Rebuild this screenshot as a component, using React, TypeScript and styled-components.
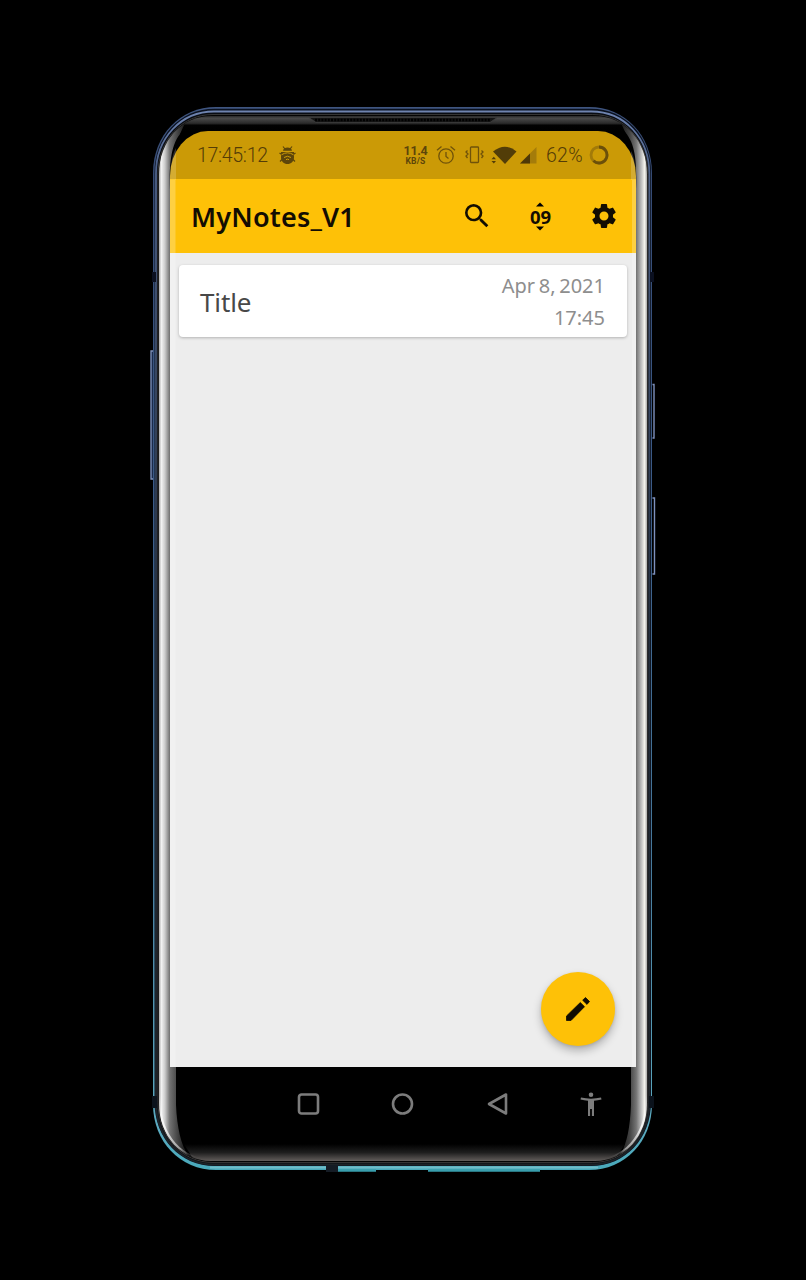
import React from "react";
import styled, { createGlobalStyle } from "styled-components";

const GlobalStyle = createGlobalStyle`
  * { box-sizing: border-box; }
  body { margin: 0; background: #000; font-family: "Noto Sans", "Open Sans", sans-serif; }
  button { font-family: inherit; }
`;

const Stage = styled.main`
  width: 806px;
  height: 1280px;
  background: #000;
  padding: 107px 0 0 150px;
  overflow: hidden;
`;

const Phone = styled.div`
  position: relative;
  width: 506px;
  height: 1066px;
  padding: 24px 20px 0;
`;

const FrameArt = styled.svg`
  position: absolute;
  inset: 0;
  pointer-events: none;
`;

const Screen = styled.section`
  position: relative;
  width: 466px;
  height: 1010px;
  display: flex;
  flex-direction: column;
`;

const StatusBar = styled.header`
  height: 48px;
  flex: none;
  display: flex;
  align-items: center;
  padding: 0 27px 0 27px;
  background: #cb9a06;
  color: #6b4f0a;
  border-radius: 38px 38px 0 0 / 45px 45px 0 0;
`;

const StatusText = styled.span<{ $width: number; $tracking?: number }>`
  width: ${(p) => p.$width}px;
  margin-top: 1px;
  font: 300 19.5px/24px Roboto, sans-serif;
  letter-spacing: ${(p) => p.$tracking ?? -0.3}px;
  white-space: nowrap;
  color: #543c06;
`;

const StatusIcon = styled.svg<{ $gap?: number }>`
  flex: none;
  display: block;
  margin-left: ${(p) => p.$gap ?? 0}px;
`;

const Speed = styled.div`
  margin-left: auto;
  width: 25px;
  text-align: center;
  font: 700 12.5px/12px Roboto, sans-serif;
  letter-spacing: -0.3px;
  color: #5d450a;
`;

const SpeedUnit = styled.small`
  display: block;
  font-size: 8.5px;
  line-height: 8px;
  letter-spacing: 0.2px;
`;

const AppBar = styled.div`
  height: 74px;
  flex: none;
  display: flex;
  align-items: center;
  padding: 0 17px 0 21px;
  background: #fec107;
  color: #130d02;
`;

const AppTitle = styled.h1`
  margin: 1px auto 0 0;
  font-size: 27px;
  line-height: 34px;
  font-weight: 600;
  letter-spacing: 0.2px;
`;

const Actions = styled.div`
  display: flex;
  gap: 34px;
`;

const ActionButton = styled.button`
  width: 30px;
  height: 32px;
  padding: 0;
  border: 0;
  background: none;
  color: inherit;
  display: flex;
  flex-direction: column;
  align-items: center;
  justify-content: center;
`;

const SearchGlyph = styled.svg`
  flex: none;
  margin-left: 2px;
`;

const SortDigits = styled.span`
  margin: 1px 0 1px 1px;
  font-size: 18.5px;
  line-height: 17px;
  font-weight: 700;
`;

const Content = styled.div`
  flex: 1;
  display: flex;
  flex-direction: column;
  justify-content: space-between;
  padding: 12px 9px 21px;
  background: #ededed;
`;

const NoteCard = styled.article`
  height: 72px;
  display: flex;
  align-items: center;
  justify-content: space-between;
  padding: 0 22px 0 21px;
  border-radius: 4px;
  background: #fff;
  box-shadow: 0 1px 3px rgba(0, 0, 0, 0.25);
`;

const NoteTitle = styled.h2`
  margin: 1px 0 0;
  font-size: 26px;
  line-height: 34px;
  font-weight: 400;
  letter-spacing: -0.1px;
  color: #484848;
`;

const NoteDate = styled.div`
  margin-top: 2px;
  text-align: right;
  font-size: 20px;
  line-height: 32px;
  font-weight: 400;
  letter-spacing: 0;
  word-spacing: -1.5px;
  color: #8e8e8e;
  white-space: nowrap;
`;

const Fab = styled.button`
  align-self: flex-end;
  width: 74px;
  height: 74px;
  margin-right: 12px;
  padding: 0;
  border: 0;
  border-radius: 50%;
  display: flex;
  align-items: center;
  justify-content: center;
  background: #fec107;
  box-shadow: 0 5px 9px rgba(0, 0, 0, 0.25), 0 1px 3px rgba(0, 0, 0, 0.1);
`;

const NavBar = styled.nav`
  height: 74px;
  flex: none;
  display: flex;
  align-items: center;
  justify-content: space-between;
  padding: 0 33px 0 126px;
`;

const NavIcon = styled.svg`
  display: block;
  width: 24px;
  height: 24px;
  overflow: visible;
`;

function shell(x: number, y: number, r: number, b: number, rx: number, ry: number) {
  const k = 0.43;
  return [
    `M${x + rx} ${y}H${r - rx}`,
    `C${r - rx * k} ${y} ${r} ${y + ry * k} ${r} ${y + ry}`,
    `V${b - ry}`,
    `C${r} ${b - ry * k} ${r - rx * k} ${b} ${r - rx} ${b}`,
    `H${x + rx}`,
    `C${x + rx * k} ${b} ${x} ${b - ry * k} ${x} ${b - ry}`,
    `V${y + ry}`,
    `C${x} ${y + ry * k} ${x + rx * k} ${y} ${x + rx} ${y}Z`,
  ].join("");
}

function PhoneFrame() {
  return (
    <FrameArt width="506" height="1066" viewBox="150 107 506 1066">
      <defs>
        <linearGradient id="rim" x1="0" y1="107" x2="0" y2="1171" gradientUnits="userSpaceOnUse">
          <stop offset="0" stopColor="#3f5580" />
          <stop offset=".06" stopColor="#354a73" />
          <stop offset=".35" stopColor="#3b5a86" />
          <stop offset=".7" stopColor="#47799b" />
          <stop offset=".96" stopColor="#5cabc0" />
          <stop offset="1" stopColor="#48a9ba" />
        </linearGradient>
        <linearGradient id="inner" x1="0" y1="111" x2="0" y2="1166" gradientUnits="userSpaceOnUse">
          <stop offset="0" stopColor="#6f84b0" />
          <stop offset=".05" stopColor="#4f638b" />
          <stop offset=".5" stopColor="#25303f" />
          <stop offset="1" stopColor="#1d2226" />
        </linearGradient>
        <linearGradient id="glass" x1="159" y1="0" x2="647" y2="0" gradientUnits="userSpaceOnUse">
          <stop offset="0" stopColor="#aaa" />
          <stop offset=".005" stopColor="#f2f2f2" />
          <stop offset=".012" stopColor="#ccc" />
          <stop offset=".022" stopColor="#737373" />
          <stop offset=".036" stopColor="#4a4a4a" />
          <stop offset=".05" stopColor="#222" />
          <stop offset=".95" stopColor="#222" />
          <stop offset=".965" stopColor="#444" />
          <stop offset=".978" stopColor="#747474" />
          <stop offset=".988" stopColor="#bbb" />
          <stop offset=".995" stopColor="#f4f3ed" />
          <stop offset="1" stopColor="#aaa" />
        </linearGradient>
        <linearGradient id="topGlass" x1="0" y1="114" x2="0" y2="131" gradientUnits="userSpaceOnUse">
          <stop offset="0" stopColor="#0b0b0c" />
          <stop offset=".25" stopColor="#4a4a4a" />
          <stop offset=".55" stopColor="#2a2a2a" />
          <stop offset=".66" stopColor="#020202" />
          <stop offset="1" stopColor="#000" />
        </linearGradient>
        <linearGradient id="bottomGlass" x1="0" y1="1144" x2="0" y2="1161" gradientUnits="userSpaceOnUse">
          <stop offset="0" stopColor="#000" />
          <stop offset=".5" stopColor="#1e1e1e" />
          <stop offset="1" stopColor="#625d5b" />
        </linearGradient>
        <linearGradient id="cornerGlow" x1="0" y1="1095" x2="0" y2="1158" gradientUnits="userSpaceOnUse">
          <stop offset="0" stopColor="#fff" stopOpacity="0" />
          <stop offset=".5" stopColor="#fff" stopOpacity=".8" />
          <stop offset=".85" stopColor="#ddd" stopOpacity=".6" />
          <stop offset="1" stopColor="#888" stopOpacity="0" />
        </linearGradient>
        <clipPath id="glassClip">
          <path d={shell(159, 116, 647, 1161, 52, 58)} />
        </clipPath>
      </defs>

      <path d={shell(153, 107, 652, 1170, 63, 66)} fill="url(#rim)" />
      <path d={shell(154.5, 108.8, 651, 1166, 60, 64)} fill="#0a111f" />
      <path d={shell(156, 111.5, 649.3, 1164.5, 58, 62)} fill="#090c12" stroke="url(#inner)" strokeWidth="1.8" />
      <path d={shell(158, 114.5, 647.7, 1162.5, 55, 60)} fill="#050505" stroke="#4b4947" strokeWidth=".7" />
      <path d={shell(159, 116, 647, 1161, 52, 58)} fill="url(#glass)" />

      <g clipPath="url(#glassClip)">
        <path
          d="M186 128C172 139 169 158 170 190V1067H176V1105C177 1128 181 1144 188 1156L195 1170H612L621 1154C627 1142 630 1128 631 1105V1067H636V190C637 158 635 140 621 128L610 100H200Z"
          fill="#000"
        />
        <path d="M180 134L190 112H616L626 134H600V131H206V134Z" fill="url(#topGlass)" />
        <path d="M184 1144H625L613 1162H195Z" fill="url(#bottomGlass)" />
        <path d={shell(159, 116, 647, 1161, 52, 58)} fill="none" stroke="url(#cornerGlow)" strokeWidth="4.500" />
      </g>

      <path d="M309 117.500H497L490 122.500H316Z" fill="#151515" stroke="#3e3e3e" strokeWidth=".8" />
      <path d="M315 120H491" stroke="#000" strokeWidth="2.500" strokeDasharray="2 1.200" />

      <path d="M153 351H151V479H153" fill="#1b2b4b" stroke="#8093bd" strokeWidth="1.300" />
      <path d="M652.500 384.500H654V438H652.500M652.500 498H654.500V574H652.500" fill="none" stroke="#7e91bd" strokeWidth="1.400" />
      <rect x="152" y="272" width="4" height="10" fill="#0b1020" />
      <rect x="650" y="272" width="4" height="10" fill="#0b1020" />
      <rect x="152" y="1096" width="5" height="12" fill="#0b121b" />
      <rect x="649" y="1096" width="5" height="12" fill="#0b121b" />
      <path d="M210 1167.500H598" stroke="#71bdca" strokeWidth="2" />
      <path d="M338 1170.500H376M428 1170.500H540" stroke="#399ead" strokeWidth="2.500" />
      <rect x="326" y="1165" width="12" height="7" fill="#151c25" />
    </FrameArt>
  );
}

function EdgeSheen() {
  return (
    <FrameArt width="506" height="1066" viewBox="150 107 506 1066">
      <path d="M170 180H175.500V1067H170ZM632 180H636V1067H632Z" fill="#fff" opacity=".24" />
      <path d="M170 180C170 165 173 152 176 148V180Z" fill="#fff" opacity=".18" />
      <path d="M636 180C636 165 634 156 631 151V180Z" fill="#fff" opacity=".18" />
    </FrameArt>
  );
}

function StatusIcons() {
  return (
    <>
      <StatusIcon $gap={8} width="20" height="20" viewBox="0 0 20 20" fill="none" stroke="#6f520a" strokeWidth="1.300">
        <circle cx="10" cy="11" r="7.200" />
        <path d="M1 5.200 5.500 1.500M19 5.200 14.500 1.500M10 7v4.500l2.500 2" />
      </StatusIcon>
      <StatusIcon $gap={9} width="19" height="20" viewBox="0 0 19 20" fill="none" stroke="#6f520a" strokeWidth="1.300">
        <rect x="5.500" y="2" width="8" height="15.500" rx=".8" />
        <path d="M2.500 5.500 1 7l2 2-2 2 1.500 2M16.500 5.500 18 7l-2 2 2 2-1.500 2" />
      </StatusIcon>
      <StatusIcon $gap={7} width="26" height="20" viewBox="0 0 26 20" fill="#523d08">
        <path d="M2 6.500Q14 -3 25.500 6.500L14 19Z" />
        <path d="M.5 14.200h4.500L2.800 11.800ZM.5 16h4.500l-2.200 2.500Z" />
      </StatusIcon>
      <StatusIcon $gap={2} width="18" height="20" viewBox="0 0 18 20">
        <path d="M1 18.500 17.500 2v16.500Z" fill="#a47c0a" />
        <path d="M1 18.500 11 8.500v10Z" fill="#4e3907" />
      </StatusIcon>
    </>
  );
}

export default function App() {
  return (
    <Stage>
      <GlobalStyle />
      <Phone>
        <PhoneFrame />
        <Screen>
          <StatusBar>
            <StatusText $width={71}>17:45:12</StatusText>
            <StatusIcon $gap={10} width="19" height="20" viewBox="0 0 19 20">
              <path d="M5 1.500 7 4M14 1.500 12 4M1.500 8l3 2M17.500 8l-3 2M2 16.500l3-3M17 16.500l-3-3" stroke="#5d450a" strokeWidth="1.200" />
              <path d="M5 5.800C5.500 1.500 13.500 1.500 14 5.800ZM3 7h13v5.500c0 3.800-3 6.500-6.500 6.500S3 16.300 3 12.500Z" fill="#5d450a" />
              <path d="M3.500 9.800Q9.500 5.800 15.500 9.800M6 12.500Q9.500 10 13 12.500M8 14.700Q9.500 13.500 11 14.700" fill="none" stroke="#cb9a06" strokeWidth="1" />
            </StatusIcon>
            <Speed>
              11.4
              <SpeedUnit>KB/S</SpeedUnit>
            </Speed>
            <StatusIcons />
            <StatusIcon as="span" $gap={9} />
            <StatusText $width={39} $tracking={0.3}>62%</StatusText>
            <StatusIcon $gap={4} width="20" height="20" viewBox="0 0 20 20" fill="none" strokeWidth="2.800">
              <circle cx="10" cy="10" r="8" stroke="#a27a09" />
              <path d="M10 2A8 8 0 1 1 4.500 15.800" stroke="#6b4f0a" />
            </StatusIcon>
          </StatusBar>

          <AppBar>
            <AppTitle>MyNotes_V1</AppTitle>
            <Actions>
              <ActionButton aria-label="Search">
                <SearchGlyph width="32" height="32" viewBox="0 0 24 24" fill="currentColor">
                  <path d="M15.500 14h-.79l-.28-.27A6.470 6.470 0 0 0 16 9.500 6.500 6.500 0 1 0 9.500 16c1.610 0 3.090-.59 4.230-1.570l.27.28v.79l5 4.990L20.490 19l-4.990-5zm-6 0C7.010 14 5 11.990 5 9.500S7.010 5 9.500 5 14 7.010 14 9.500 11.990 14 9.500 14z" />
                </SearchGlyph>
              </ActionButton>
              <ActionButton aria-label="Sort">
                <svg width="8" height="5" viewBox="0 0 8 5"><path d="M0 4.500 4 .5l4 4Z" /></svg>
                <SortDigits>09</SortDigits>
                <svg width="8" height="5" viewBox="0 0 8 5"><path d="M0 .5h8l-4 4Z" /></svg>
              </ActionButton>
              <ActionButton aria-label="Settings">
                <svg width="30" height="30" viewBox="0 0 24 24" fill="currentColor">
                  <path d="M19.140 12.940c.04-.3.06-.61.06-.94 0-.32-.02-.64-.07-.94l2.030-1.580a.49.49 0 0 0 .12-.61l-1.920-3.320a.488.488 0 0 0-.59-.22l-2.390.96c-.5-.38-1.030-.7-1.620-.94l-.36-2.540a.484.484 0 0 0-.48-.41h-3.840c-.24 0-.43.17-.47.41l-.36 2.540c-.59.24-1.130.57-1.620.94l-2.390-.96c-.22-.08-.47 0-.59.22L2.740 8.870c-.12.21-.08.47.12.61l2.030 1.580c-.05.3-.09.63-.09.94s.02.64.07.94l-2.030 1.580a.49.49 0 0 0-.12.61l1.920 3.320c.12.22.37.29.59.22l2.390-.96c.5.38 1.030.7 1.620.94l.36 2.540c.05.24.24.41.48.41h3.840c.24 0 .44-.17.47-.41l.36-2.540c.59-.24 1.130-.56 1.620-.94l2.390.96c.22.08.47 0 .59-.22l1.920-3.320c.12-.22.07-.47-.12-.61l-2.010-1.580zM12 15.600A3.600 3.600 0 1 1 12 8.400a3.600 3.600 0 0 1 0 7.200z" />
                </svg>
              </ActionButton>
            </Actions>
          </AppBar>

          <Content>
            <NoteCard>
              <NoteTitle>Title</NoteTitle>
              <NoteDate>
                Apr 8, 2021
                <br />
                17:45
              </NoteDate>
            </NoteCard>
            <Fab aria-label="New note">
              <svg width="26" height="26" viewBox="-13 -13 26 26" fill="#100b02" stroke="#100b02" strokeWidth=".8" strokeLinejoin="round">
                <path d="M-11.500 11.500V7L2.300 -6.500L6.500 -2.300L-7 11.500ZM4.700 -8.800L7.500 -11.500L11.500 -7.500L9 -4.600Z" />
              </svg>
            </Fab>
          </Content>

          <NavBar>
            <NavIcon viewBox="0 0 24 24" fill="none" stroke="#7c7c7c" strokeWidth="2.600">
              <rect x="3" y="2.500" width="19" height="19" rx="2.500" />
            </NavIcon>
            <NavIcon viewBox="0 0 24 24" fill="none" stroke="#7c7c7c" strokeWidth="2.600">
              <circle cx="12.500" cy="12" r="9.500" />
            </NavIcon>
            <NavIcon viewBox="0 0 24 24" fill="none" stroke="#7c7c7c" strokeWidth="2.600" strokeLinejoin="round">
              <path d="M21 2.500v19L4 12Z" />
            </NavIcon>
            <NavIcon viewBox="0 0 24 24" fill="#7c7c7c">
              <path d="M12 .5a2.300 2.300 0 1 1 0 4.600 2.300 2.300 0 0 1 0-4.600ZM22.500 7.500C20 8.200 17.500 8.500 15 8.700V24h-2.100v-7h-1.800v7H9V8.700C6.500 8.500 4 8.200 1.500 7.500L2 5.500c6.500 1.500 13.500 1.500 20 0Z" />
            </NavIcon>
          </NavBar>
        </Screen>
        <EdgeSheen />
      </Phone>
    </Stage>
  );
}
